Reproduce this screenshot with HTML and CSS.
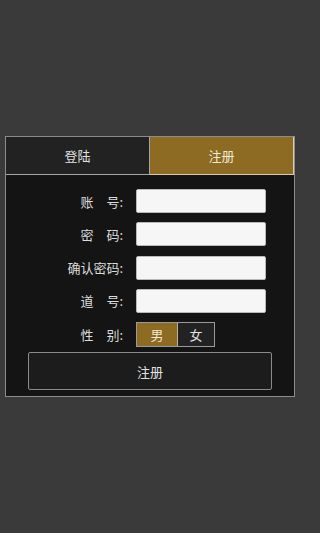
FILE: index.html
```html
<!DOCTYPE html>
<html lang="zh">
<head>
<meta charset="utf-8">
<link rel="stylesheet" href="styles.css">
</head>
<body>
<div class="panel">
  <div class="tabs">
    <div class="tab tab-login">登陆</div>
    <div class="tab tab-active">注册</div>
  </div>
  <div class="form">
    <div class="row">
      <label class="label">账　号:</label>
      <input class="field" type="text">
    </div>
    <div class="row">
      <label class="label">密　码:</label>
      <input class="field" type="password">
    </div>
    <div class="row">
      <label class="label">确认密码:</label>
      <input class="field" type="password">
    </div>
    <div class="row">
      <label class="label">道　号:</label>
      <input class="field" type="text">
    </div>
    <div class="row row-gender">
      <label class="label">性　别:</label>
      <div class="gender">
        <div class="g g-on">男</div>
        <div class="g g-off">女</div>
      </div>
    </div>
    <div class="btn">注册</div>
  </div>
</div>
</body>
</html>
```

FILE: styles.css
```css
html, body {
  margin: 0;
  padding: 0;
}
body {
  width: 300px;
  height: 533px;
  background: #3a3a3a;
  font-family: "Noto Sans CJK SC", "Noto Sans", sans-serif;
  font-size: 13px;
  color: #e2e2e2;
  padding-top: 136px;
  padding-left: 5px;
  box-sizing: border-box;
}
.panel {
  width: 290px;
  box-sizing: border-box;
  border: 1px solid #8c8c8c;
  background: #141414;
}
.tabs {
  display: flex;
  height: 38px;
}
.tab {
  flex: 1;
  display: flex;
  align-items: center;
  justify-content: center;
  box-sizing: border-box;
}
.tab-login {
  background: #222222;
  border-bottom: 1px solid #a5a5a5;
  border-right: 1px solid #a5a5a5;
}
.tab-active {
  background: #8d6b22;
  border: 1px solid #d9cfae;
  border-left: none;
  border-top: none;
  color: #f0ead8;
}
.form {
  display: flex;
  flex-direction: column;
  gap: 9.33px;
  padding: 14px 0 6px;
}
.row {
  display: flex;
  align-items: center;
  height: 24px;
  gap: 13px;
}
.label {
  width: 117px;
  text-align: right;
  color: #dcdcdc;
}
.field {
  width: 130px;
  height: 24px;
  box-sizing: border-box;
  margin: 0;
  padding: 0 4px;
  background: #f6f6f6;
  border: 1px solid #b9b9b9;
  border-radius: 2px;
  outline: none;
}
.row-gender {
  height: 25px;
}
.gender {
  display: flex;
  height: 25px;
  border: 1px solid #9a9a9a;
  box-sizing: border-box;
}
.g {
  display: flex;
  align-items: center;
  justify-content: center;
}
.g-on {
  width: 40px;
  background: #8d6b22;
  color: #efe6cf;
  border-right: 1px solid #b9b09a;
}
.g-off {
  width: 36px;
  background: #222222;
}
.btn {
  margin: -4.33px 0 0 22px;
  width: 244px;
  height: 38px;
  box-sizing: border-box;
  border: 1px solid #8a8a8a;
  border-radius: 2px;
  background: #1c1c1c;
  display: flex;
  align-items: center;
  justify-content: center;
}
```
